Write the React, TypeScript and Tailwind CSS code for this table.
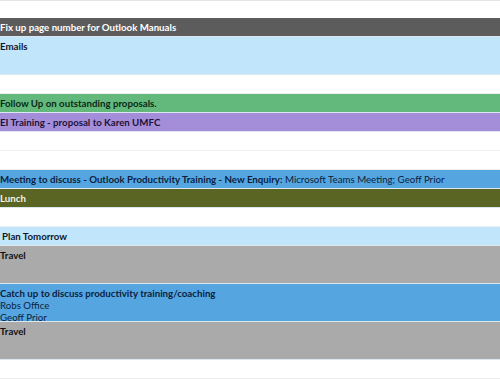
import React from 'react';

type Slot = {
    span: number;
    title?: string;
    extra?: string;
    lines?: string[];
    bg?: string;
    text?: string;
    indent?: boolean;
};

const SLOTS: Slot[] = [
    { span: 1, title: "Fix up page number for Outlook Manuals", bg: "bg-[#5c5c5c]", text: "text-white" },
    { span: 2, title: "Emails", bg: "bg-[#c1e5fa]", text: "text-[#111827]" },
    { span: 1 },
    { span: 1, title: "Follow Up on outstanding proposals.", bg: "bg-[#63b97c]", text: "text-[#0b2a16]" },
    { span: 1, title: "EI Training - proposal to Karen UMFC", bg: "bg-[#a58ed9]", text: "text-[#1d1238]" },
    { span: 1 },
    { span: 1 },
    { span: 1, title: "Meeting to discuss - Outlook Productivity Training - New Enquiry:", extra: "Microsoft Teams Meeting; Geoff Prior", bg: "bg-[#55a6e0]", text: "text-[#0c213d]" },
    { span: 1, title: "Lunch", bg: "bg-[#5a6423]", text: "text-[#f4f4e8]" },
    { span: 1 },
    { span: 1, title: "Plan Tomorrow", bg: "bg-[#c1e5fa]", text: "text-[#111827]", indent: true },
    { span: 2, title: "Travel", bg: "bg-[#aaaaaa]", text: "text-[#111111]" },
    { span: 2, title: "Catch up to discuss productivity training/coaching", lines: ["Robs Office", "Geoff Prior"], bg: "bg-[#55a6e0]", text: "text-[#0c213d]" },
    { span: 2, title: "Travel", bg: "bg-[#aaaaaa]", text: "text-[#111111]" },
    { span: 1 },
];

const CalendarDay = () => {
    return (
        <div className="w-[500px] h-[380px] overflow-hidden bg-white" style={{ fontFamily: 'Lato, "Noto Sans", sans-serif' }}>
            <div className="h-[18px] border-t border-[#e4e4e4]" />
            <div className="flex flex-col">
                {SLOTS.map((s, i) => {
                    const h = s.span === 2 ? "h-[38px]" : "h-[19px]";
                    if (!s.title) {
                        return <div key={i} className={`${h} border-b border-[#eeeeee]`} />;
                    }
                    return (
                        <div key={i} className={`${h} border-b border-[#dbe8ef] ${s.bg} ${s.text} text-[9.7px] leading-[12px] pt-[3px] ${s.indent ? "pl-[2px]" : "pl-0"}`}>
                            <div className="whitespace-nowrap">
                                <span className="font-bold">{s.title}</span>
                                {s.extra && <span className="font-normal"> {s.extra}</span>}
                            </div>
                            {s.lines && s.lines.map((l, j) => (
                                <div key={j} className="whitespace-nowrap font-normal">{l}</div>
                            ))}
                        </div>
                    );
                })}
            </div>
        </div>
    );
};

export default function App() {
    return <CalendarDay />;
}
